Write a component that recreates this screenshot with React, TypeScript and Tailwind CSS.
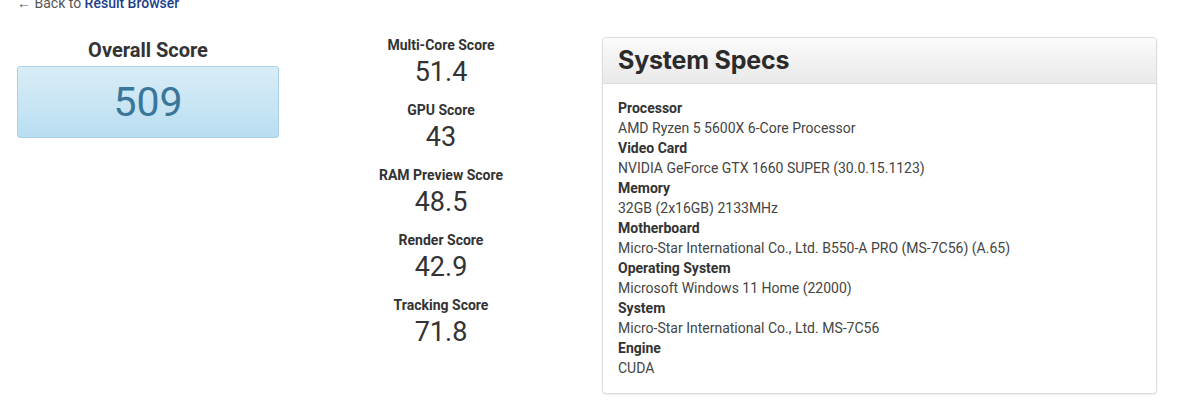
const scores = [
  { label: "Multi-Core Score", value: "51.4" },
  { label: "GPU Score", value: "43" },
  { label: "RAM Preview Score", value: "48.5" },
  { label: "Render Score", value: "42.9" },
  { label: "Tracking Score", value: "71.8" },
];

const specs = [
  { label: "Processor", value: "AMD Ryzen 5 5600X 6-Core Processor" },
  { label: "Video Card", value: "NVIDIA GeForce GTX 1660 SUPER (30.0.15.1123)" },
  { label: "Memory", value: "32GB (2x16GB) 2133MHz" },
  { label: "Motherboard", value: "Micro-Star International Co., Ltd. B550-A PRO (MS-7C56) (A.65)" },
  { label: "Operating System", value: "Microsoft Windows 11 Home (22000)" },
  { label: "System", value: "Micro-Star International Co., Ltd. MS-7C56" },
  { label: "Engine", value: "CUDA" },
];

export default function App() {
  return (
    <div className="h-[400px] w-[1185px] overflow-hidden bg-white font-['Roboto',sans-serif] text-[#333]">
      <div className="-mt-[7px] h-[20px] pl-[17px] text-[14px] leading-5">
        <span className="text-[#555]">← Back to </span>
        <a className="font-medium text-[#1c3f8c]" href="#">
          Result Browser
        </a>
      </div>

      <div className="mt-[24px] flex items-start pl-[17px]">
        {/* overall */}
        <div className="flex w-[262px] flex-col">
          <h2 className="text-center text-[20px] font-bold leading-[26px] text-[#333]">Overall Score</h2>
          <div className="mt-[3px] flex h-[72px] items-center justify-center rounded-[3px] border border-[#a9d2e8] bg-gradient-to-b from-[#d9edf7] to-[#b9def1]">
            <span className="text-[41px] leading-none text-[#3a7699]">509</span>
          </div>
        </div>

        {/* sub scores */}
        <div className="-mt-[2px] ml-[62px] flex w-[200px] flex-col">
          {scores.map((s) => (
            <div key={s.label} className="mb-[11px] flex flex-col items-center">
              <div className="text-[14px] font-bold leading-5 text-[#333]">{s.label}</div>
              <div className="text-[27px] leading-[34px] text-[#333]">{s.value}</div>
            </div>
          ))}
        </div>

        {/* specs */}
        <div className="ml-[61px] w-[555px] rounded-[4px] border border-[#dcdcdc] bg-white shadow-[0_1px_2px_rgba(0,0,0,0.08)]">
          <div className="flex h-[46px] items-center rounded-t-[4px] border-b border-[#dcdcdc] bg-gradient-to-b from-[#fbfbfb] to-[#e9e9e9] px-[15px]">
            <h3 className="font-['Inter',sans-serif] text-[25px] font-bold leading-none tracking-[-0.2px] text-[#2b2b2b]">
              System Specs
            </h3>
          </div>
          <div className="px-[15px] pb-[15px] pt-[14px] text-[14px] leading-5">
            {specs.map((s) => (
              <div key={s.label}>
                <div className="font-bold text-[#333]">{s.label}</div>
                <div className="text-[#444]">{s.value}</div>
              </div>
            ))}
          </div>
        </div>
      </div>
    </div>
  );
}
